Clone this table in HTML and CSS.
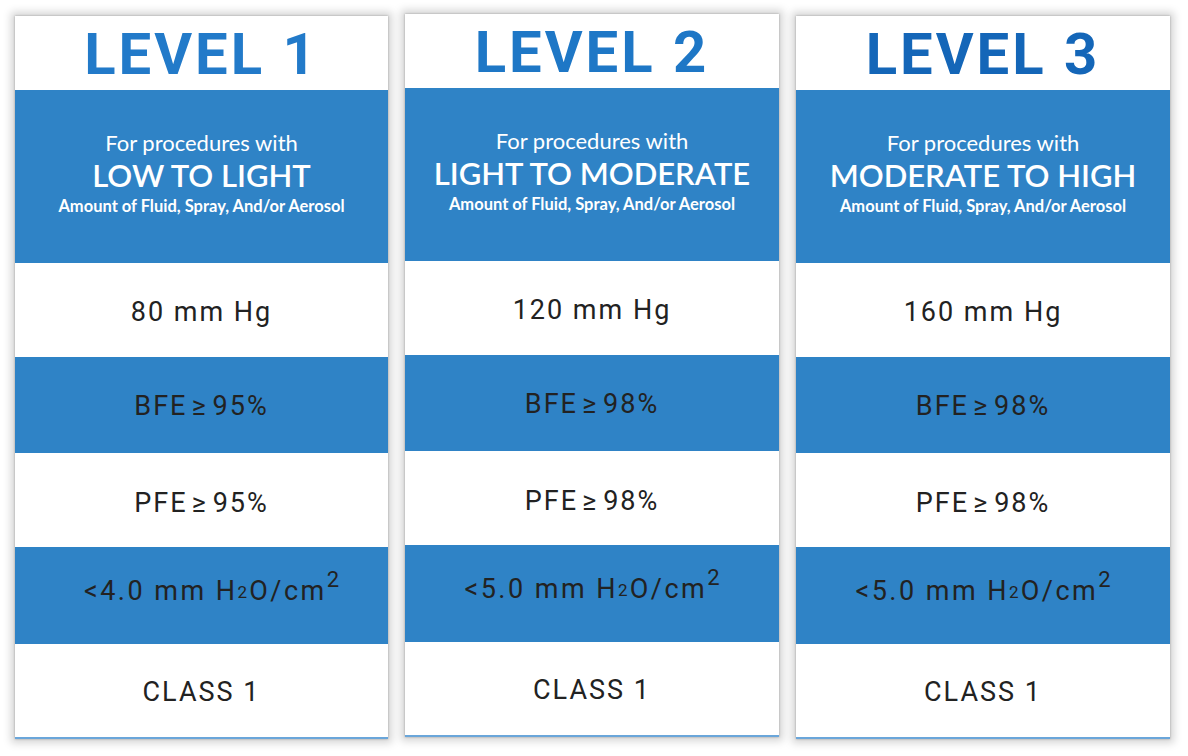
FILE: index.html
```html
<!DOCTYPE html>
<html>
<head>
<meta charset="utf-8">
<link rel="stylesheet" href="styles.css">
</head>
<body>
<div class="board">
  <div class="col col-1">
    <div class="title">LEVEL 1</div>
    <div class="intro">
      <div class="for">For procedures with</div>
      <div class="range">LOW TO LIGHT</div>
      <div class="amount">Amount of Fluid, Spray, And/or Aerosol</div>
    </div>
    <div class="cell c1">80 mm Hg</div>
    <div class="cell blue c2">BFE<span class="ge">≥</span>95%</div>
    <div class="cell c3">PFE<span class="ge">≥</span>95%</div>
    <div class="cell blue c4 shift">&lt;4.0 mm H<span class="sub">2</span>O/cm<span class="sup">2</span></div>
    <div class="cell c5">CLASS 1</div>
  </div>
  <div class="col col-2">
    <div class="title">LEVEL 2</div>
    <div class="intro">
      <div class="for">For procedures with</div>
      <div class="range">LIGHT TO MODERATE</div>
      <div class="amount">Amount of Fluid, Spray, And/or Aerosol</div>
    </div>
    <div class="cell c1">120 mm Hg</div>
    <div class="cell blue c2">BFE<span class="ge">≥</span>98%</div>
    <div class="cell c3">PFE<span class="ge">≥</span>98%</div>
    <div class="cell blue c4">&lt;5.0 mm H<span class="sub">2</span>O/cm<span class="sup">2</span></div>
    <div class="cell c5">CLASS 1</div>
  </div>
  <div class="col col-3">
    <div class="title">LEVEL 3</div>
    <div class="intro">
      <div class="for">For procedures with</div>
      <div class="range">MODERATE TO HIGH</div>
      <div class="amount">Amount of Fluid, Spray, And/or Aerosol</div>
    </div>
    <div class="cell c1">160 mm Hg</div>
    <div class="cell blue c2">BFE<span class="ge">≥</span>98%</div>
    <div class="cell c3">PFE<span class="ge">≥</span>98%</div>
    <div class="cell blue c4">&lt;5.0 mm H<span class="sub">2</span>O/cm<span class="sup">2</span></div>
    <div class="cell c5">CLASS 1</div>
  </div>
</div>
</body>
</html>
```
FILE: styles.css
```css
html, body {
  margin: 0;
  padding: 0;
  background: #ffffff;
}
body {
  width: 1188px;
  height: 756px;
  overflow: hidden;
}
.board {
  display: flex;
  align-items: flex-start;
  gap: 17px;
  padding: 16px 0 0 15px;
}
.col {
  width: 373px;
  display: flex;
  flex-direction: column;
  background: #fff;
  box-shadow: 0 0 8px 4px rgba(0, 0, 0, 0.17), 0 0 2px rgba(0, 0, 0, 0.3);
  border-bottom: 2px solid #6aa6da;
}
.col-2 {
  width: 374px;
  margin-top: -2px;
}
.col-3 {
  width: 374px;
}
.title {
  height: 74px;
  display: flex;
  align-items: center;
  justify-content: center;
  font-family: Roboto, "Liberation Sans", sans-serif;
  font-weight: 700;
  font-size: 58px;
  letter-spacing: 3px;
  color: #227ac9;
  padding-top: 1px;
  box-sizing: border-box;
}
.col-2 .title {
  color: #1e77c6;
}
.col-3 .title {
  color: #1466b8;
}
.intro {
  height: 173px;
  background: #2f83c6;
  color: #fff;
  display: flex;
  flex-direction: column;
  align-items: center;
  justify-content: center;
  font-family: Lato, "Open Sans", sans-serif;
  padding-bottom: 8px;
  box-sizing: border-box;
}
.for {
  font-size: 22px;
  line-height: 26px;
}
.range {
  font-size: 31px;
  font-weight: 600;
  line-height: 36px;
  margin-top: 1px;
}
.amount {
  font-size: 16.5px;
  font-weight: 700;
  line-height: 20px;
  margin-top: 3px;
}
.cell {
  display: flex;
  align-items: center;
  justify-content: center;
  font-family: Roboto, "Liberation Sans", sans-serif;
  font-size: 27px;
  letter-spacing: 2px;
  color: #222;
  box-sizing: border-box;
  white-space: pre;
}
.cell.blue {
  background: #2f83c6;
}
.c1 { height: 94px; padding-top: 4px; }
.c2 { height: 96px; padding-top: 2px; }
.c3 { height: 94px; padding-top: 5px; }
.c4 { height: 97px; padding-bottom: 10px; letter-spacing: 2.5px; }
.c5 { height: 93px; padding-top: 2px; }
.shift {
  padding-left: 20px;
}
.ge {
  margin-left: 4px;
  margin-right: 5px;
}
.sub {
  font-size: 17px;
  letter-spacing: 0;
  position: relative;
  top: 1px;
  margin-right: 2px;
}
.sup {
  font-size: 22px;
  position: relative;
  top: -11px;
  letter-spacing: 0;
}
```
